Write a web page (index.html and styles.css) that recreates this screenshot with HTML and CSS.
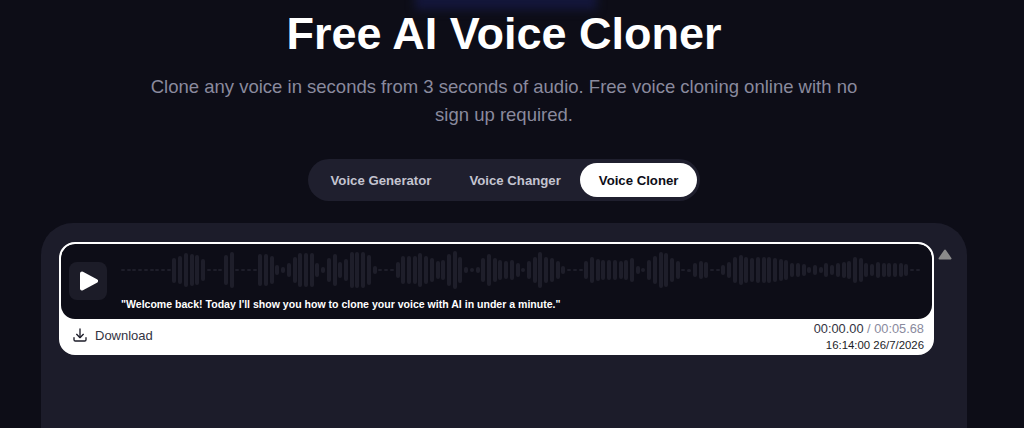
FILE: index.html
```html
<!DOCTYPE html>
<html lang="en">
<head>
    <meta charset="UTF-8">
    <meta name="viewport" content="width=device-width, initial-scale=1.0">
    <title>Free AI Voice Cloner</title>
    <link rel="stylesheet" href="styles.css">
</head>
<body>
    <div class="glow"></div>

    <header class="hero">
        <h1>Free AI Voice Cloner</h1>
        <p>Clone any voice in seconds from 3 seconds of audio. Free voice cloning online with no sign up required.</p>
    </header>

    <nav class="tabs">
        <button class="tab">Voice Generator</button>
        <button class="tab">Voice Changer</button>
        <button class="tab active">Voice Cloner</button>
    </nav>

    <main class="panel">
        <div class="history">
            <div class="clip">
                <div class="clip-player">
                    <button class="play" aria-label="Play">
                        <svg width="18" height="20" viewBox="0 0 18 20"><path d="M2 2.5 L16 10 L2 17.5 Z" fill="#fff" stroke="#fff" stroke-width="4" stroke-linejoin="round"/></svg>
                    </button>
                    <div class="clip-body">
                        <div class="wave" id="wave"></div>
                        <div class="quote">"Welcome back! Today I'll show you how to clone your voice with AI in under a minute."</div>
                    </div>
                </div>
                <div class="clip-footer">
                    <a class="download">
                        <svg width="16" height="16" viewBox="0 0 24 24" fill="none" stroke="#1c1c28" stroke-width="2" stroke-linecap="round" stroke-linejoin="round"><path d="M12 3v12"/><path d="M7 11l5 5 5-5"/><path d="M3 16v3a2 2 0 0 0 2 2h14a2 2 0 0 0 2-2v-3"/></svg>
                        Download
                    </a>
                    <div class="times">
                        <div class="duration">00:00.00 <span>/ 00:05.68</span></div>
                        <div class="stamp">16:14:00 26/7/2026</div>
                    </div>
                </div>
            </div>
            <svg class="scroll-up" width="14" height="11" viewBox="0 0 14 11"><path d="M7 1.5 L12.5 9.5 L1.5 9.5 Z" fill="#8a8a8a" stroke="#8a8a8a" stroke-width="2" stroke-linejoin="round"/></svg>
        </div>
    </main>

    <script>
        // Bar heights of the waveform, left to right
        const bars = [
            2,2,2,2,2,2,2,2,2,
            25,28,34,32,30,22,
            2,2,2,
            30,36,
            2,2,2,2,
            32,32,28,10,6,14,26,34,34,34,
            14,6,24,32,16,22,36,36,36,30,8,
            2,2,2,
            16,28,28,28,34,28,24,18,20,32,38,26,6,4,6,24,32,24,20,18,20,
            14,4,18,26,36,26,24,18,8,
            2,2,2,
            18,26,22,20,20,20,18,20,24,8,4,20,28,36,34,24,18,2,3,14,18,16,
            2,2,10,16,26,30,26,24,26,26,26,24,22,20,14,14,12,6,10,6,14,10,14,16,18,26,24,14,12,16,14,14,14,14,12,2,2
        ];
        const wave = document.getElementById('wave');
        bars.forEach(h => {
            const bar = document.createElement('i');
            bar.style.height = h + 'px';
            wave.appendChild(bar);
        });
    </script>
</body>
</html>
```

FILE: styles.css
```css
body {
    width: 1008px;
    height: 428px;
    margin: 0;
    background-color: #0d0d17;
    font-family: "Liberation Sans", Arial, sans-serif;
    overflow: hidden;
    position: relative;
}
html {
    background-color: #0d0d17;
}
.glow {
    position: absolute;
    top: -14px;
    left: 415px;
    width: 182px;
    height: 24px;
    background-color: #13163a;
    filter: blur(5px);
}
.hero {
    position: relative;
    text-align: center;
    padding-top: 9px;
}
h1 {
    margin: 0;
    color: #fff;
    font-size: 45px;
    line-height: 50px;
    font-weight: 700;
}
.hero p {
    width: 720px;
    margin: 14px auto 0;
    color: #8a8a9e;
    font-size: 18.5px;
    line-height: 28px;
}
.tabs {
    display: flex;
    width: fit-content;
    margin: 30px auto 0;
    padding: 4px 3px 4px 4px;
    background-color: #1f1f2e;
    border-radius: 21px;
}
.tab {
    border: none;
    background: none;
    padding: 0 19px;
    height: 34px;
    border-radius: 17px;
    font-family: inherit;
    font-size: 13.2px;
    font-weight: 700;
    color: #c4c4d0;
    cursor: pointer;
}
.tab.active {
    background-color: #fff;
    color: #0d0d17;
}
.panel {
    width: 926px;
    height: 205px;
    margin: 22px auto 0;
    padding: 19px 0 0 18px;
    box-sizing: border-box;
    background-color: #1c1c2a;
    border-radius: 32px 32px 0 0;
}
.history {
    display: flex;
    gap: 4px;
}
.clip {
    width: 875px;
    height: 113px;
    box-sizing: border-box;
    background-color: #fff;
    border: 2px solid #fff;
    border-radius: 16px;
    overflow: hidden;
}
.clip-player {
    display: flex;
    gap: 14px;
    height: 75px;
    box-sizing: border-box;
    padding: 18px 10px 0 8px;
    background-color: #0d0d17;
    border-radius: 14px;
}
.play {
    flex: none;
    display: flex;
    align-items: center;
    justify-content: center;
    width: 38px;
    height: 38px;
    padding: 0 0 0 2px;
    border: none;
    border-radius: 8px;
    background-color: #1c1c28;
}
.clip-body {
    flex: 1;
    min-width: 0;
}
.wave {
    display: flex;
    align-items: center;
    justify-content: space-between;
    height: 44px;
    margin-top: -14px;
}
.wave i {
    display: block;
    width: 4px;
    border-radius: 2px;
    background-color: #1e1e2a;
}
.quote {
    margin-top: 5px;
    color: #fff;
    font-size: 10.55px;
    line-height: 14px;
    font-weight: 700;
}
.clip-footer {
    display: flex;
    align-items: center;
    justify-content: space-between;
    height: 34px;
    padding: 0 8px 0 11px;
}
.download {
    display: flex;
    align-items: center;
    gap: 7px;
    margin-top: -2px;
    color: #33333f;
    font-size: 13px;
}
.times {
    text-align: right;
    color: #33333f;
}
.duration {
    font-size: 12.8px;
    line-height: 18px;
}
.duration span {
    color: #8a8a9e;
}
.stamp {
    color: #1c1c28;
    font-size: 11.4px;
    line-height: 14px;
}
.scroll-up {
    flex: none;
    margin-top: 7px;
}
```
